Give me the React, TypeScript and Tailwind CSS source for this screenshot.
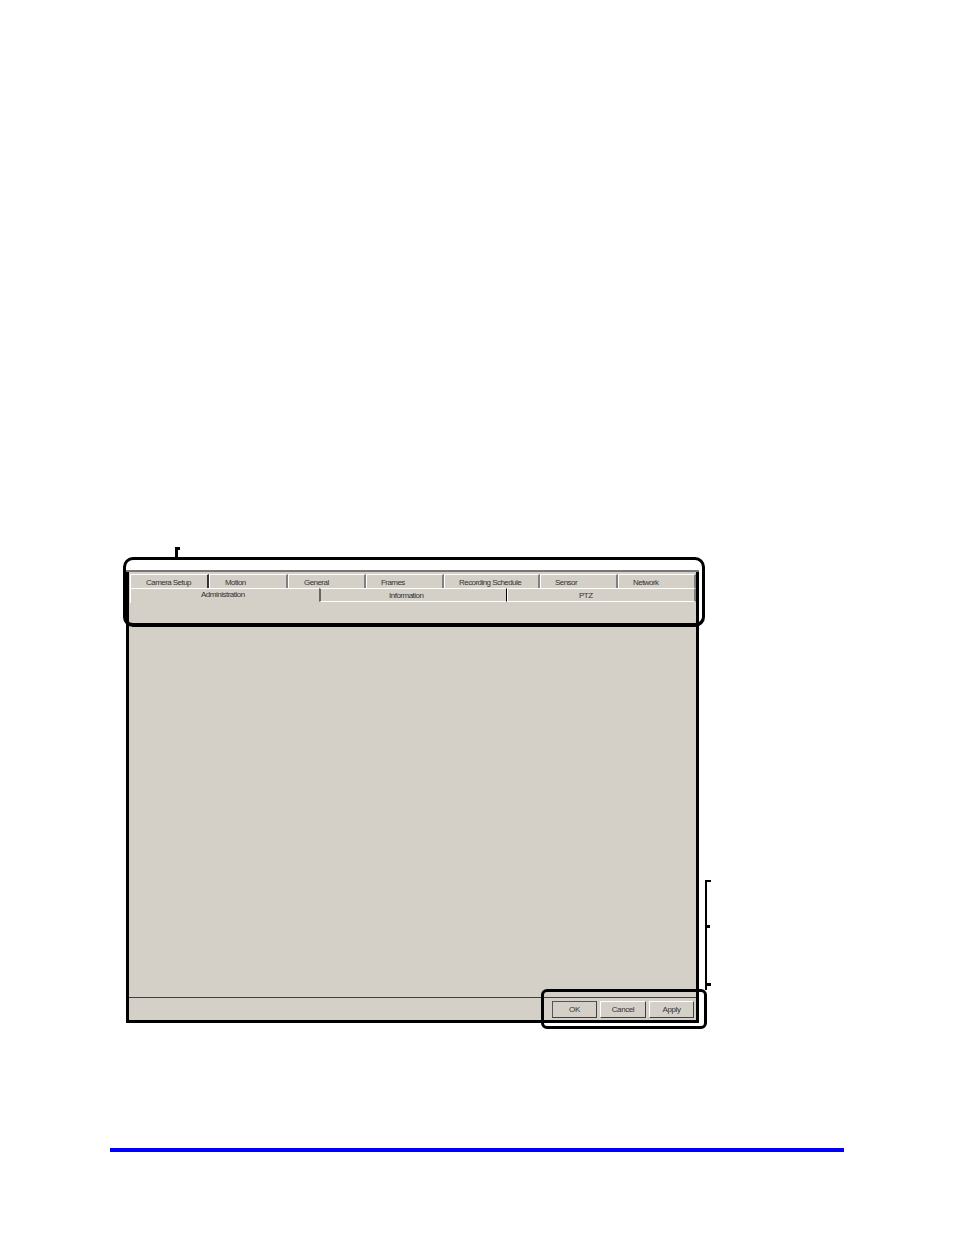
const topTabs = [
  { label: "Camera Setup", width: "w-[79px]", pad: "pl-[15px]", line: "border-r-[#333]" },
  { label: "Motion", width: "w-[79px]", pad: "pl-[15px]", line: "border-r-[#808080]" },
  { label: "General", width: "w-[78px]", pad: "pl-[15px]", line: "border-r-[#808080]" },
  { label: "Frames", width: "w-[78px]", pad: "pl-[14px]", line: "border-r-[#808080]" },
  { label: "Recording Schedule", width: "w-[96px]", pad: "pl-[14px]", line: "border-r-[#808080]" },
  { label: "Sensor", width: "w-[78px]", pad: "pl-[14px]", line: "border-r-[#808080]" },
  { label: "Network", width: "w-[78px]", pad: "pl-[14px]", line: "border-r-[#808080]" },
];

function DialogButton({ label, width, isDefault }: { label: string; width: string; isDefault?: boolean }) {
  return (
    <button
      className={`${width} h-[17px] border ${
        isDefault ? "border-t-[#555] border-l-[#555]" : "border-t-white border-l-white"
      } border-r-[#404040] border-b-[#404040] bg-[#d4d0c8] text-[8px] leading-[15px] tracking-[-0.4px] text-[#333]`}
    >
      {label}
    </button>
  );
}

export default function App() {
  return (
    <div className="relative h-[1235px] w-[954px] overflow-hidden bg-white font-['Liberation_Sans',sans-serif]">
      <div className="pl-[126px] pt-[570px]">
        {/* dialog */}
        <div className="flex h-[453px] w-[573px] flex-col border-x-[3px] border-b-[3px] border-x-black border-b-black bg-[#d4d0c8]">
          <div className="-mx-[3px] h-[2px] bg-[#777]" />

          {/* tabs */}
          <div className="flex pl-px pt-[2px]">
            {topTabs.map((t) => (
              <div
                key={t.label}
                className={`${t.width} ${t.pad} h-[14px] border-t border-l border-t-white border-l-white border-r-2 ${t.line} whitespace-nowrap text-[8px] leading-[15px] tracking-[-0.55px] text-[#333]`}
              >
                {t.label}
              </div>
            ))}
          </div>
          <div className="flex pl-px">
            <div className="h-[15px] w-[189px] border-t border-l border-white pl-[70px] text-[8px] leading-[12px] tracking-[-0.5px] text-[#333]">
              Administration
            </div>
            <div className="h-[14px] w-[188px] border-y border-y-white border-l-2 border-l-[#666] border-r border-r-black pl-[68px] text-[8px] leading-[14px] tracking-[-0.5px] text-[#333]">
              Information
            </div>
            <div className="h-[14px] w-[189px] border-y border-y-white border-l border-l-white border-r-2 border-r-[#808080] pl-[71px] text-[8px] leading-[14px] tracking-[-0.5px] text-[#333]">
              PTZ
            </div>
          </div>

          <div className="flex-1" />

          {/* footer */}
          <div className="flex h-[23px] justify-end gap-[3px] border-t border-t-[#404040] pr-[2px] pt-[3px]">
            <DialogButton label="OK" width="w-[45px]" isDefault />
            <DialogButton label="Cancel" width="w-[46px]" />
            <DialogButton label="Apply" width="w-[45px]" />
          </div>
        </div>

        {/* blue rule at the bottom of the page */}
        <div className="ml-[-16px] mt-[125px] h-[4px] w-[734px] bg-[#0000ff]" />
      </div>

      {/* callouts drawn over the dialog */}
      <div className="absolute left-[123px] top-[557px] h-[70px] w-[582px] rounded-[10px] border-[3px] border-b-4 border-black" />
      <div className="absolute left-[541px] top-[989px] h-[40px] w-[166px] rounded-[6px] border-[3px] border-black" />

      <div className="absolute left-[175px] top-[547px] h-[10px] w-[3px] bg-black" />
      <div className="absolute left-[175px] top-[547px] h-[3px] w-[5px] bg-black" />

      <div className="absolute left-[705px] top-[880px] h-[110px] w-[2px] bg-black" />
      <div className="absolute left-[705px] top-[880px] h-[2px] w-[6px] bg-black" />
      <div className="absolute left-[705px] top-[925px] h-[3px] w-[5px] bg-black" />
      <div className="absolute left-[705px] top-[983px] h-[3px] w-[6px] bg-black" />
    </div>
  );
}
